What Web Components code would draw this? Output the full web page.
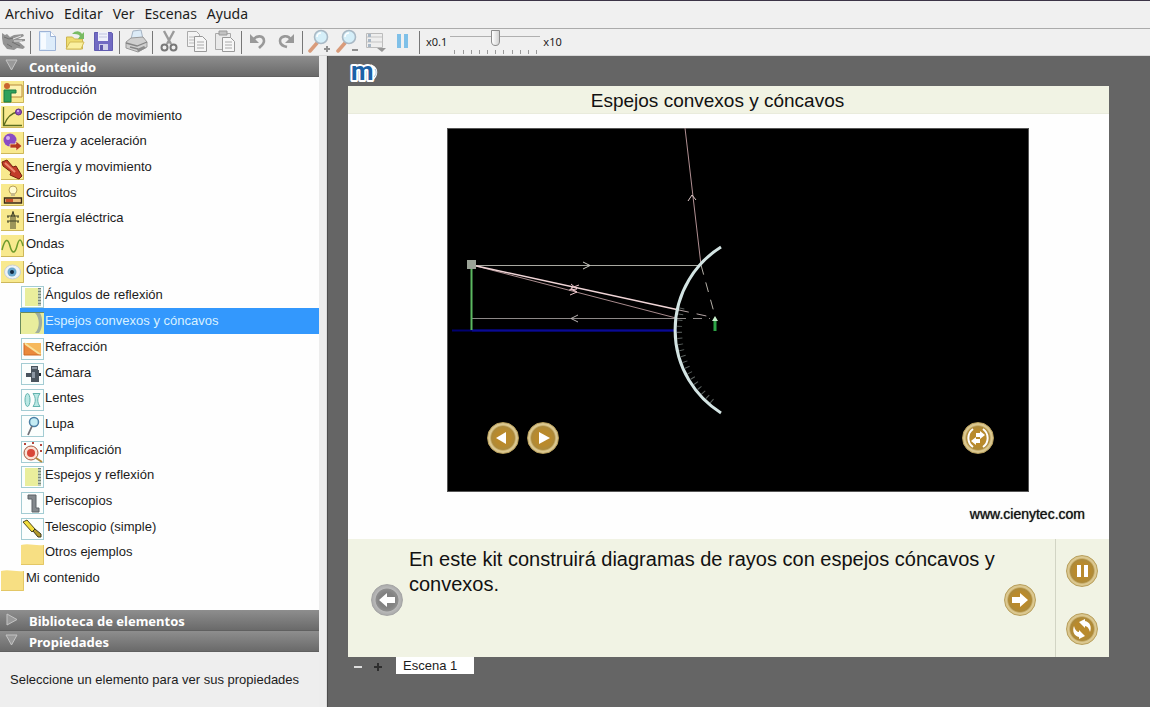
<!DOCTYPE html>
<html lang="es">
<head>
<meta charset="utf-8">
<title>Espejos convexos y cóncavos</title>
<style>
  html, body { height: 100%; margin: 0; }
  body { font: 13px "Liberation Sans", Arial, sans-serif; color: #1c1c1c; background: #656565; }
</style>
</head>
<body>
<lab-app>
  <menu-bar slot="menu"></menu-bar>
  <tool-bar slot="tools"></tool-bar>
  <side-panel slot="side"></side-panel>
  <scene-stage slot="stage"></scene-stage>
</lab-app>

<script>
const define = (name, html, setup) => {
  const template = document.createElement('template');
  template.innerHTML = '<style>:host,*{box-sizing:border-box}button{font:inherit;color:inherit;border:0;background:none;padding:0;margin:0}</style>' + html;
  customElements.define(name, class extends HTMLElement {
    constructor() {
      super();
      this.attachShadow({ mode: 'open' }).append(template.content.cloneNode(true));
    }
    connectedCallback() { if (setup) setup(this, this.shadowRoot); }
  });
};

/* ---------- icons of the content tree, 24 x 22 ---------- */
const yellow = '<rect x="1" y="0" width="23" height="22" fill="#f8e98e"/><path d="M23.5 0V21.5H1" fill="none" stroke="#cdb75a"/>';
const sheet = '<rect x="1.500" y=".5" width="22" height="21" fill="#fbfefd" stroke="#a3ccd3"/>';
const treeIcons = {
  intro: yellow + '<path d="M10 4h12v12H10" fill="#fdf2b0" stroke="#b8893d"/><circle cx="7" cy="5" r="3" fill="#c8642e"/><path d="M4 9h12v3H11v9H4z" fill="#2fa15c" stroke="#1d7a43"/>',
  motion: yellow + '<path d="M3.500 1V19.500H22M4 19C7 11 11 7 18 6" fill="none" stroke="#5d6e1f" stroke-width="1.300"/><circle cx="18.500" cy="6" r="3" fill="#8f4ec0" stroke="#5c2a86"/><circle cx="18" cy="5" r="1" fill="#e5c8f5"/>',
  force: yellow + '<circle cx="10" cy="8" r="6.500" fill="#8a4cc4"/><circle cx="8" cy="6" r="2" fill="#d3aef0"/><path d="M10 12h6v-3l6 5-6 5v-3h-6z" fill="#b53a20" stroke="#fff1b5" stroke-width=".7"/>',
  energy: yellow + '<path d="M2 4l5-2 6 7 3-1 6 10-3 3-9-4 1-3-8-6z" fill="#c23c2a" stroke="#74210f"/><path d="M5 5l10 9" stroke="#ec8c71" stroke-width="2"/>',
  circuit: yellow + '<circle cx="13" cy="6" r="4" fill="#fffbd0" stroke="#b9a25a"/><path d="M11 9h4v3h-4z" fill="#c7ba8a"/><path d="M4.500 19v-5h17v5z" fill="#e9c07b" stroke="#3a2a18" stroke-width="1.400"/><path d="M6 15h7v3H6z" fill="#c8512a"/>',
  grid: yellow + '<path d="M13 2v18M11 20V8l2-5 2 5v12M7 7h12M8 7v2M18 7v2M7 12h12M8 12v2M18 12v2" fill="none" stroke="#3e4026"/>',
  wave: yellow + '<path d="M2 15C5 3 8 3 10 11s5 8 7 0 4-8 6 0" fill="none" stroke="#6e9a2d" stroke-width="1.500"/>',
  eye: yellow + '<ellipse cx="12.500" cy="11" rx="8" ry="7" fill="#eef3f7" stroke="#c9cfd2"/><circle cx="12" cy="11" r="4.500" fill="#6aa6cc"/><circle cx="12" cy="11" r="2" fill="#142840"/>',
  mirror: sheet + '<path d="M5 2h13v18H5z" fill="#e9ee9c"/><path d="M18 2h3v18h-3z" fill="#b9c7b4"/><path d="M19.500 2V20" stroke="#77877b" stroke-width="3" stroke-dasharray="1 2"/>',
  curved: '<rect x="0" y="0" width="24" height="22" fill="#e9ed9d"/><path d="M15 1c5 5 5 15 0 20h4c4-5 4-15 1-20z" fill="#9fae9e"/><path d="M.5 22V.5H24" fill="none" stroke="#6a8a5c"/>',
  refraction: sheet + '<path d="M4 5h17v12H4z" fill="#f6b95c"/><path d="M4 5l17 12H4z" fill="#ea8a3c"/><path d="M4 5l17 12" stroke="#f9e29a" stroke-width="2"/><path d="M4 5v12h17" stroke="#cf6a24" fill="none"/>',
  camera: sheet + '<path d="M11 3h7v4h1v12h-8v-5H6v-4h5z" fill="#4a545e"/><path d="M12 4h5v2h-5zM12 9h3v6h-3z" fill="#8b96a2"/><path d="M19 10h2v3h-2z" fill="#222a31"/>',
  lenses: sheet + '<ellipse cx="7.500" cy="11" rx="2.500" ry="6.500" fill="#b9e8e4" stroke="#62b3ae"/><path d="M13 4.500h7c-3 4-3 9 0 13h-7c3-4 3-9 0-13z" fill="#b9e8e4" stroke="#62b3ae"/>',
  loupe: sheet + '<circle cx="14" cy="7" r="4.500" fill="#c4ecf4" stroke="#4b7fa5" stroke-width="1.500"/><path d="M12 11L8 20" stroke="#6f7076" stroke-width="1.800"/>',
  amplify: sheet + '<circle cx="11" cy="12" r="7" fill="#fbe2d6" stroke="#a8573f"/><circle cx="11" cy="12" r="4" fill="#d8473a"/><path d="M16 17l6 4" stroke="#b18a3b" stroke-width="2"/><path d="M4 3h2M12 2h2M20 4h2M20 10h2" stroke="#b5453b" stroke-width="2"/>',
  periscope: sheet + '<path d="M8 3h8v13h3v4h-7V7H8z" fill="#84898d" stroke="#5d6266"/>',
  telescope: sheet + '<path d="M3 4l4-2 8 9-3 3z" fill="#f0dc3c" stroke="#514b1c"/><path d="M13 13l2-2 6 5v3h-3z" fill="#b39a2c" stroke="#3d3a20"/>',
  folder: '<path d="M1 2c8-2 14 1 23 0v20H1z" fill="#f7df83"/><path d="M23.500 2V21.500H1" fill="none" stroke="#e3c766"/>'
};

define('content-item', `
<style>
  :host { display: flex; min-height: 0; }
  button { flex: 1; display: flex; align-items: center; gap: 2px; text-align: left; white-space: nowrap; }
  svg { width: 24px; height: 22px; align-self: flex-end; flex: none; }
  span { padding-bottom: 1px; }
  :host([nested]) { margin-left: 20px; }
  :host([nested]) button { gap: 1px; }
  :host([selected]) button { background: #3398fd; color: #d9f1ff; }
  :host([selected]) svg { height: auto; }
</style>
<button type="button"><svg viewBox="0 0 24 22" aria-hidden="true"></svg><span><slot></slot></span></button>`,
(host, root) => { root.querySelector('svg').innerHTML = treeIcons[host.getAttribute('icon')]; });

define('panel-header', `
<style>
  :host { display: block; flex: none; }
  button { width: 100%; height: 21px; display: flex; align-items: center; padding: 2px 0 0 5px; gap: 10px;
    font: bold 13px/19px "Noto Sans", "Open Sans", sans-serif; color: #fff;
    background: linear-gradient(#8e8e8e, #6a6a6a); border-bottom: 1px solid #606060; }
  svg { width: 14px; height: 14px; margin-top: -4px; flex: none; }
  :host([closed]) svg { transform: rotate(-90deg); }
</style>
<button type="button"><svg viewBox="0 0 14 14" aria-hidden="true"><path d="M1 2h11L6.500 12z" fill="#999" stroke="#c4c4c4"/></svg><span><slot></slot></span></button>`,
(host, root) => root.querySelector('button').setAttribute('aria-expanded', String(!host.hasAttribute('closed'))));

define('side-panel', `
<style>
  :host { display: flex; flex-direction: column; height: 100%; background: #fefefe; }
  nav { flex: 1; min-height: 0; overflow: hidden; }
  .tree { display: grid; grid-auto-rows: 1fr; height: 514px; }
  p { margin: 0; height: 55px; flex: none; padding: 20px 10px; line-height: 16px; background: #eee; white-space: nowrap; }
</style>
<panel-header>Contenido</panel-header>
<nav aria-label="Contenido"><div class="tree">
  <content-item icon="intro">Introducción</content-item>
  <content-item icon="motion">Descripción de movimiento</content-item>
  <content-item icon="force">Fuerza y aceleración</content-item>
  <content-item icon="energy">Energía y movimiento</content-item>
  <content-item icon="circuit">Circuitos</content-item>
  <content-item icon="grid">Energía eléctrica</content-item>
  <content-item icon="wave">Ondas</content-item>
  <content-item icon="eye">Óptica</content-item>
  <content-item nested icon="mirror">Ángulos de reflexión</content-item>
  <content-item nested selected icon="curved">Espejos convexos y cóncavos</content-item>
  <content-item nested icon="refraction">Refracción</content-item>
  <content-item nested icon="camera">Cámara</content-item>
  <content-item nested icon="lenses">Lentes</content-item>
  <content-item nested icon="loupe">Lupa</content-item>
  <content-item nested icon="amplify">Amplificación</content-item>
  <content-item nested icon="mirror">Espejos y reflexión</content-item>
  <content-item nested icon="periscope">Periscopios</content-item>
  <content-item nested icon="telescope">Telescopio (simple)</content-item>
  <content-item nested icon="folder">Otros ejemplos</content-item>
  <content-item icon="folder">Mi contenido</content-item>
</div></nav>
<panel-header closed>Biblioteca de elementos</panel-header>
<panel-header>Propiedades</panel-header>
<p>Seleccione un elemento para ver sus propiedades</p>`);

define('menu-bar', `
<style>
  :host { display: block; border-top: 1px solid #3c3447; background: #f0f0f0; }
  nav { display: flex; gap: 10px; height: 27px; padding: 0 5px 2px; align-items: center; font: 14px/20px "Noto Sans", "Open Sans", sans-serif; }
</style>
<nav><button type="button">Archivo</button><button type="button">Editar</button><button type="button">Ver</button><button type="button">Escenas</button><button type="button">Ayuda</button></nav>`);

/* ---------- toolbar icons, 24 x 24 ---------- */
const lens = '<path d="M3 22l7-8" stroke="#d99b7a" stroke-width="3.500" stroke-linecap="round"/><circle cx="14" cy="8" r="6.500" fill="#d5eff9" stroke="#a9b9c5" stroke-width="1.600"/><path d="M10 8a4 4 0 0 1 4-4" stroke="#fff" stroke-width="1.500" fill="none"/>';
const toolIcons = {
  gator: '<path d="M0 4l3 2 2-1 3 3 4-2 9-1 1 2-6 3 7 0 0 2-6 1 6 5-2 2-6-1-3 2-7-1-4-5-1-6z" fill="#939393"/><path d="M2 8l5 2 4-1M10 13l8 4M5 15l5 3" stroke="#6f6f6f" fill="none"/><path d="M11 10l8-3M12 12h8" stroke="#e6e6e6"/>',
  new: '<path d="M4.500 2.500h11l5 5v14h-16z" fill="#ddecfa" stroke="#9db3d6"/><path d="M6 4h5v16H6z" fill="#f6fbff"/><path d="M15.500 2.500v5h5" fill="#fff" stroke="#9db3d6"/>',
  open: '<path d="M3.500 20V8h6l2 2h8v10z" fill="#efdd6f" stroke="#cdb44f"/><path d="M3 20l4-7h14l-3 7z" fill="#faf0a0" stroke="#d2bb57"/><path d="M9 5c4-4 8-3 10 0l2-2v7h-6l2-3c-2-2-4-2-8-2z" fill="#79bb62"/>',
  save: '<path d="M3.500 3.500h17l1 1v17h-18z" fill="#716ac2" stroke="#605bb0"/><path d="M7 3h10v9H7z" fill="#eef0fa"/><path d="M8 5h8M8 8h8" stroke="#c2c5df"/><path d="M8 15h9v6H8z" fill="#cfcfe9"/><path d="M9 16h3v5H9z" fill="#5d57ac"/>',
  print: '<path d="M7 10l2-8 8-1 2 9z" fill="#dcebf7" stroke="#a6b4c4"/><path d="M2 13l5-4 12-1 4 5v5l-9 5-12-4z" fill="#cfcfcf" stroke="#999"/><path d="M2 14l11 3 10-4M6 18l8 2" stroke="#858585" stroke-width="1.300" fill="none"/><path d="M13 20l7-3 2 2-8 4z" fill="#8c8c8c"/>',
  cut: '<path d="M7 2l7 13M17 2l-7 13" stroke="#9a9a9a" stroke-width="2.400"/><circle cx="7.500" cy="18.500" r="3" fill="none" stroke="#787878" stroke-width="2"/><circle cx="16.500" cy="18.500" r="3" fill="none" stroke="#787878" stroke-width="2"/>',
  copy: '<path d="M2.500 2.500h9l3 3v12h-12z" fill="#f4f4f4" stroke="#aaa"/><path d="M4 8h5M4 11h5M4 14h5" stroke="#bbb"/><path d="M9.500 7.500h8l4 4v11h-12z" fill="#f6f6f6" stroke="#999"/><path d="M12 13h7M12 16h7M12 19h7" stroke="#aaa"/>',
  paste: '<path d="M2.500 4.500h15v16h-15z" fill="#e9e9e9" stroke="#aaa"/><path d="M6 2h8v4H6z" fill="#c2c2c2" stroke="#999"/><path d="M9.500 8.500h8l4 4v10h-12z" fill="#f7f7f7" stroke="#999"/><path d="M12 13h7M12 16h7M12 19h7" stroke="#aaa"/>',
  undo: '<path d="M7 11c3-5 11-5 11 1 0 3-3 5-5 7" fill="none" stroke="#999" stroke-width="2.600"/><path d="M4 5v9h9z" fill="#999"/>',
  redo: '<path d="M17 11C14 5 6 7 6 12c0 4 3 5 7 6" fill="none" stroke="#999" stroke-width="2.600"/><path d="M20 5v9h-9z" fill="#999"/>',
  zoomin: lens + '<path d="M17 20h6M20 17v6" stroke="#8f8f8f" stroke-width="2"/>',
  zoomout: lens + '<path d="M17 21h6" stroke="#8f8f8f" stroke-width="2"/>',
  view: '<path d="M3.500 4.500h16v14h-16z" fill="#eee" stroke="#bcbcbc"/><path d="M4 8h15M4 13h15" stroke="#c5c5c5"/><path d="M5 5h3v3H5zM5 10h3v3H5zM5 15h3v3H5z" fill="#a9b7c5"/><path d="M14 19h9l-4 4z" fill="#969696"/>',
  pause: '<path d="M6 5h4v14H6zM13 5h4v14h-4z" fill="#7fc0e8"/>'
};
define('tool-button', `
<style>
  :host { display: block; }
  button { display: block; width: 28px; height: 26px; padding: 0 2px 2px; }
  svg { display: block; width: 24px; height: 24px; }
</style>
<button type="button"><svg viewBox="0 0 24 24" aria-hidden="true"></svg></button>`,
(host, root) => {
  root.querySelector('svg').innerHTML = toolIcons[host.getAttribute('icon')];
  root.querySelector('button').setAttribute('aria-label', host.getAttribute('label'));
});

define('speed-slider', `
<style>
  :host { display: flex; align-items: center; gap: 3px; margin-left: 4px; font: 11px/16px "Noto Sans", "Open Sans", sans-serif; }
  .rail { width: 90px; height: 26px; display: flex; flex-direction: column; }
  input { -webkit-appearance: none; appearance: none; width: 100%; height: 18px; margin: 0; background: linear-gradient(#b0b0b0, #b0b0b0) 0 7px / 100% 1px no-repeat; }
  input::-webkit-slider-thumb { -webkit-appearance: none; width: 9px; height: 16px; border: 1px solid #8c8c8c; background: linear-gradient(90deg, #fff, #d2d2d2); border-radius: 1px 1px 5px 5px; }
  .ticks { display: flex; justify-content: space-between; padding: 3px 3px 0 4px; }
  .ticks i { width: 1px; height: 4px; background: #999; }
</style>
<label for="speed">x0.1</label>
<div class="rail"><input id="speed" type="range" min="-10" max="10" value="0"><div class="ticks"><i></i><i></i><i></i><i></i><i></i><i></i><i></i><i></i><i></i><i></i><i></i></div></div>
<span>x10</span>`);

define('tool-bar', `
<style>
  :host { display: flex; align-items: center; height: 28px; background: #f0f0f0; border-top: 1px solid #ababab; border-bottom: 1px solid #d8d8d8; }
  hr { width: 1px; height: 23px; margin: 0 2px; border: 0; background: #777; flex: none; }
</style>
<tool-button icon="gator" label="Inicio"></tool-button><hr>
<tool-button icon="new" label="Nuevo"></tool-button>
<tool-button icon="open" label="Abrir"></tool-button>
<tool-button icon="save" label="Guardar"></tool-button><hr>
<tool-button icon="print" label="Imprimir"></tool-button><hr>
<tool-button icon="cut" label="Cortar"></tool-button>
<tool-button icon="copy" label="Copiar"></tool-button>
<tool-button icon="paste" label="Pegar"></tool-button><hr>
<tool-button icon="undo" label="Deshacer"></tool-button>
<tool-button icon="redo" label="Rehacer"></tool-button><hr>
<tool-button icon="zoomin" label="Acercar"></tool-button>
<tool-button icon="zoomout" label="Alejar"></tool-button>
<tool-button icon="view" label="Vista"></tool-button>
<tool-button icon="pause" label="Pausa"></tool-button><hr>
<speed-slider></speed-slider>`);

/* ---------- round playback buttons ---------- */
const roundIcons = {
  back: '<path d="M19 10v12L9 16z"/>',
  play: '<path d="M12 10v12l11-6z"/>',
  left: '<path d="M8 16l8-7v4h8v6h-8v4z"/>',
  right: '<path d="M24 16l-8-7v4H8v6h8v4z"/>',
  pause: '<path d="M11 10h4v12h-4zM18 10h4v12h-4z"/>',
  swap: '<path d="M11 7a11 11 0 0 0 0 18M21 7a11 11 0 0 1 0 18" fill="none" stroke="#fff" stroke-width="2"/><path d="M14 11h4V9l5 4-5 4v-2h-4zM18 17h-4v-2l-5 4 5 4v-2h4z"/>',
  reset: '<path d="M13 9l6-3v2c5 1 7 6 5 11-1-4-3-6-5-6v2zM19 23l-6 3v-2c-5-1-7-6-5-11 1 4 3 6 5 6v-2z"/>'
};
define('round-button', `
<style>
  :host { display: block; width: 32px; height: 32px; }
  button { display: block; width: 32px; height: 32px; border-radius: 50%; border: 1px solid #b89f5c;
    background: radial-gradient(circle, #b98a2c 0 35%, #ad8a3a 54%, #dcc992 62%, #cdb477 100%); }
  :host([muted]) button { border-color: #a5a5a5; background: radial-gradient(circle, #828282 0 35%, #8e8e8e 52%, #b9b9b9 56%, #919191 100%); }
  svg { display: block; width: 30px; height: 30px; fill: #fff; }
</style>
<button type="button"><svg viewBox="1 1 30 30" aria-hidden="true"></svg></button>`,
(host, root) => {
  root.querySelector('svg').innerHTML = roundIcons[host.getAttribute('icon')];
  root.querySelector('button').setAttribute('aria-label', host.getAttribute('label'));
});

define('ray-diagram', `
<style>
  :host { display: block; position: relative; background: #000; }
  svg { display: block; width: 100%; height: auto; }
  .controls { position: absolute; inset: auto 35px 38px 40px; display: flex; gap: 8px; }
  .controls :last-child { margin-left: auto; }
</style>
<svg viewBox="0 0 582 364" role="img" aria-label="Diagrama de rayos con un espejo convexo" fill="none">
  <rect x=".5" y=".5" width="581" height="363" stroke="#555"/>
  <path d="M5 202.500H230" stroke="#00006e" stroke-width="2"/><path d="M25 202.500H228" stroke="#0a0a94" stroke-width="2"/>
  <path d="M25 137.500H254" stroke="#a8a8a0"/><path d="M136 134l7 3.500-7 3.500" stroke="#d0d0c8"/>
  <path d="M25 190.500H229" stroke="#8d8887"/><path d="M131 187l-7 3.500 7 3.500" stroke="#bcb6b4"/>
  <path d="M25 137l204 53" stroke="#a78a8c"/>
  <path d="M25 137l207 45" stroke="#f0d5d7" stroke-width="1.500"/>
  <path d="M124 156l6 5-8 1M132 157l-8 3 6 4M123 161l7 3-7 3" stroke="#e8c2c7"/>
  <path d="M254 137L238 0" stroke="#b08f92"/><path d="M241 73l4-6 4 5" stroke="#dfc9ca"/>
  <path d="M254 137l14 51" stroke="#b5b0a8" stroke-dasharray="10 8"/>
  <path d="M232 182l32 7" stroke="#b5a5a5" stroke-dasharray="10 8"/>
  <path d="M230 190.500h33" stroke="#8d8887" stroke-dasharray="9 7"/>
  <path d="M235 180A95 95 0 0 0 266 274" stroke="#5a605e" stroke-width="5" stroke-dasharray="1 5"/>
  <path d="M274 119A98 98 0 0 0 274 285" stroke="#d3e4e3" stroke-width="3"/>
  <path d="M24.500 141V202" stroke="#5bb861" stroke-width="2"/>
  <rect x="20" y="132" width="9" height="9" fill="#9ba397"/>
  <path d="M268 191v12" stroke="#2da446" stroke-width="3"/><path d="M265 193l3-5 3 5z" fill="#c8f0cc"/>
</svg>
<div class="controls">
  <round-button icon="back" label="Retroceder"></round-button>
  <round-button icon="play" label="Reproducir"></round-button>
  <round-button icon="swap" label="Invertir"></round-button>
</div>`);

define('scene-stage', `
<style>
  :host { display: flex; flex-direction: column; height: 100%; padding: 4px 41px 33px 20px; }
  .logo { display: block; width: 36px; height: 26px; flex: none; overflow: visible; }
  .logo text { font: bold 26px/26px Roboto, sans-serif; fill: #1b62a6; stroke: #fff; stroke-width: 4px; paint-order: stroke; stroke-linejoin: round; }
  .card { flex: 1; display: flex; flex-direction: column; background: #fefefe; }
  h1 { margin: 0; height: 28px; background: #f1f3e4; font: 19px/30px "Liberation Sans", Arial, sans-serif; text-align: center; color: #111; border-bottom: 1px solid #e9ebdc; padding-right: 22px; }
  ray-diagram { margin: 14px 80px 0 99px; }
  .site { align-self: flex-end; margin: 13px 24px 0 0; font-size: 14px; line-height: 18px; color: #111; text-decoration: none; text-shadow: 0 0 1px #333; }
  footer { margin-top: auto; height: 118px; display: grid; grid-template-columns: 61px 1fr 51px 54px; background: #f1f3e4; flex: none; }
  .prev, .next { align-self: center; margin-top: 4px; }
  .prev { margin-left: 23px; }
  footer p { margin: 0; padding-top: 8px; font-size: 20px; line-height: 25px; color: #111; }
  .side { border-left: 1px solid #d2d4c4; display: flex; flex-direction: column; justify-content: space-between; padding: 16px 0 12px 10px; }
  .tabs { display: flex; height: 17px; flex: none; }
  .tabs .mini { width: 20px; display: grid; place-items: center; padding-top: 3px; }
  .tabs svg { width: 10px; height: 10px; }
  .tabs .tab { margin-left: 8px; width: 78px; background: #fff; text-align: left; padding-left: 7px; line-height: 16px; }
</style>
<svg class="logo" viewBox="0 0 36 26" role="img" aria-label="m"><path d="M24 6c6 3 5 9 1 13z" fill="#fff" stroke="#fff" stroke-width="2"/><text x="3" y="20">m</text><path d="M27 9c2 3 1 6-1 8" stroke="#9fc1dc" fill="none"/></svg>
<section class="card">
  <h1>Espejos convexos y cóncavos</h1>
  <ray-diagram></ray-diagram>
  <a class="site" href="#cienytec">www.cienytec.com</a>
  <footer>
    <round-button class="prev" muted icon="left" label="Anterior"></round-button>
    <p>En este kit construirá diagramas de rayos con espejos cóncavos y convexos.</p>
    <round-button class="next" icon="right" label="Siguiente"></round-button>
    <div class="side"><round-button icon="pause" label="Pausa"></round-button><round-button icon="reset" label="Reiniciar"></round-button></div>
  </footer>
</section>
<div class="tabs">
  <button class="mini" type="button" aria-label="Quitar escena"><svg viewBox="0 0 10 10"><path d="M1 5h8" stroke="#ddd" stroke-width="2"/></svg></button>
  <button class="mini" type="button" aria-label="Agregar escena"><svg viewBox="0 0 10 10"><path d="M1 5h8M5 1v8" stroke="#2e2e2e" stroke-width="2"/></svg></button>
  <button class="tab" type="button">Escena 1</button>
</div>`);

define('lab-app', `
<style>
  :host { display: grid; grid-template: auto auto minmax(0, 1fr) / 327px minmax(0, 1fr); min-height: 100vh; }
  .menu, .tools { grid-column: 1 / -1; }
  .side { background: #ededed; padding-right: 7px; border-right: 1px solid #dcdcdc; }
  .stage { background: #656565; border-left: 1px solid #4d4d4d; }
</style>
<div class="menu"><slot name="menu"></slot></div>
<div class="tools"><slot name="tools"></slot></div>
<div class="side"><slot name="side"></slot></div>
<div class="stage"><slot name="stage"></slot></div>`);
</script>
</body>
</html>
